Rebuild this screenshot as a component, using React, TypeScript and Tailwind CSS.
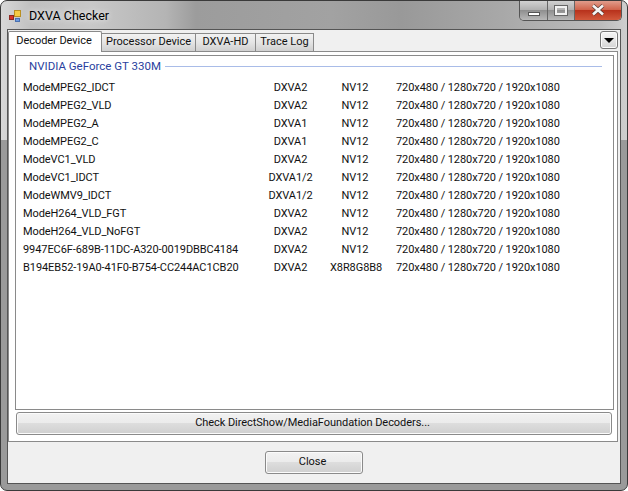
const FONT = "font-['Roboto','Liberation_Sans',Arial,sans-serif]";

const rows = [
  ["ModeMPEG2_IDCT", "DXVA2", "NV12"],
  ["ModeMPEG2_VLD", "DXVA2", "NV12"],
  ["ModeMPEG2_A", "DXVA1", "NV12"],
  ["ModeMPEG2_C", "DXVA1", "NV12"],
  ["ModeVC1_VLD", "DXVA2", "NV12"],
  ["ModeVC1_IDCT", "DXVA1/2", "NV12"],
  ["ModeWMV9_IDCT", "DXVA1/2", "NV12"],
  ["ModeH264_VLD_FGT", "DXVA2", "NV12"],
  ["ModeH264_VLD_NoFGT", "DXVA2", "NV12"],
  ["9947EC6F-689B-11DC-A320-0019DBBC4184", "DXVA2", "NV12"],
  ["B194EB52-19A0-41F0-B754-CC244AC1CB20", "DXVA2", "X8R8G8B8"],
];

function AeroButton({ label, className }: { label: string; className: string }) {
  return (
    <button
      className={`flex items-center justify-center rounded-[3px] border border-[#8a8a8a] bg-[linear-gradient(#f2f2f2_0%,#ebebeb_48%,#dddddd_50%,#cfcfcf_100%)] text-[11px] tracking-[-0.05px] text-[#111] shadow-[inset_0_0_0_1px_#fbfbfb] ${className}`}
    >
      {label}
    </button>
  );
}

export default function App() {
  return (
    <div
      className={`${FONT} flex h-[491px] w-[628px] flex-col overflow-hidden rounded-[7px] border border-[#3a3a3a] bg-[linear-gradient(to_bottom,transparent_0,transparent_139px,#9a9a9a_139px,#9a9a9a_100%),linear-gradient(90deg,#d8d8d8_0,#c0c0c0_30px,#c8c8c8_90px,#b4b4b4_165px,#9c9c9c_195px,#a2a2a2_330px,#999999_400px,#a8a8a8_500px,#bcbcbc_600px,#d0d0d0_628px)] px-[6px] pb-[6px] text-[#111]`}
    >
      {/* Title bar */}
      <div className="flex h-[28px] shrink-0 items-start">
        <svg width="16" height="16" viewBox="0 0 16 16" className="mt-[8px] ml-[2px]">
          <rect x="0.5" y="6.5" width="4" height="4" fill="#d8342a" stroke="#8f2a22" />
          <rect x="5.5" y="1.5" width="6" height="6" fill="#f6cc45" stroke="#b98f22" />
          <rect x="6.5" y="9.5" width="4" height="3" fill="#6d9be0" stroke="#4a70b0" />
        </svg>
        <span className="mt-[5px] ml-[4px] text-[12.5px] leading-[20px] text-black [text-shadow:0_0_6px_#ffffff]">
          DXVA Checker
        </span>
        <div className="mt-[-1px] mr-[-1px] ml-auto flex h-[21px] w-[103px] overflow-hidden rounded-b-[5px] border border-t-0 border-[#555]">
          <div className="flex w-[28px] items-end justify-center border-r border-[#666] bg-[linear-gradient(#d5d5d5,#b0b0b0_50%,#8f8f8f_52%,#b8b8b8)] pb-[4px]">
            <div className="h-[4px] w-[12px] border border-[#555] bg-white" />
          </div>
          <div className="flex w-[27px] items-center justify-center border-r border-[#666] bg-[linear-gradient(#d5d5d5,#b0b0b0_50%,#8f8f8f_52%,#b8b8b8)]">
            <div className="h-[9px] w-[12px] border-2 border-[#f2f2f2] outline outline-1 outline-[#666]" />
          </div>
          <div className="flex flex-1 items-center justify-center bg-[linear-gradient(#e2a393,#d0644c_48%,#b8321c_52%,#d2593c)]">
            <svg width="14" height="12" viewBox="0 0 14 12">
              <path d="M2 1.5 L12 10.5 M12 1.5 L2 10.5" stroke="#5a3a34" strokeWidth="4" />
              <path d="M2 1.5 L12 10.5 M12 1.5 L2 10.5" stroke="#f5f5f5" strokeWidth="2.6" />
            </svg>
          </div>
        </div>
      </div>

      {/* Client area */}
      <div className="flex min-h-0 flex-1 flex-col border border-[#555] bg-[#f0f0f0]">
        {/* Tab strip */}
        <div className="flex h-[21px] shrink-0 items-end text-[11px]">
          <div className="z-10 mb-[-1px] flex h-[21px] w-[94px] items-center justify-center rounded-t-[2px] border border-b-0 border-[#8a8a8a] bg-white pr-[2px] pb-[1px] tracking-[-0.05px]">
            Decoder Device
          </div>
          <div className="flex h-[18px] w-[94px] items-center justify-center border border-b-0 border-l-0 border-[#8a8a8a] bg-[linear-gradient(#f2f2f2,#e4e4e4_50%,#d0d0d0)]">
            Processor Device
          </div>
          <div className="flex h-[18px] w-[60px] items-center justify-center border border-b-0 border-l-0 border-[#8a8a8a] bg-[linear-gradient(#f2f2f2,#e4e4e4_50%,#d0d0d0)]">
            DXVA-HD
          </div>
          <div className="flex h-[18px] w-[58px] items-center justify-center border border-b-0 border-l-0 border-[#8a8a8a] bg-[linear-gradient(#f2f2f2,#e4e4e4_50%,#d0d0d0)]">
            Trace Log
          </div>
          <div className="mr-[2px] mb-[2px] ml-auto flex h-[18px] w-[18px] items-center justify-center rounded-[3px] border border-[#777] bg-[linear-gradient(#f4f4f4,#e6e6e6_50%,#d4d4d4)] shadow-[inset_0_0_0_1px_#fbfbfb]">
            <svg width="10" height="5" viewBox="0 0 10 5">
              <path d="M0 0 H10 L5 5 Z" fill="#000" />
            </svg>
          </div>
        </div>

        {/* Tab page */}
        <div className="mr-[2px] flex h-[391px] shrink-0 flex-col border border-[#8a8a8a] bg-white pt-[3px] pr-[3px] pb-[6px] pl-[6px]">
          <div className="min-h-0 flex-1 border border-[#8a8a8a] bg-white">
            <div className="flex h-[21px] items-center pr-[11px] pl-[13px]">
              <span className="text-[11.5px] text-[#2a3f9e]">NVIDIA GeForce GT 330M</span>
              <div className="ml-[4px] h-px flex-1 bg-[#a9bce8]" />
            </div>
            <div className="mt-[2px] flex flex-col pl-[7px] text-[11px] tracking-[-0.08px]">
              {rows.map(([name, api, format]) => (
                <div key={name} className="flex h-[18px] items-center">
                  <span className="w-[228px] whitespace-nowrap">{name}</span>
                  <span className="w-[79px] text-center">{api}</span>
                  <span className="w-[50px] text-center">{format}</span>
                  <span className="ml-[16px] whitespace-nowrap">720x480 / 1280x720 / 1920x1080</span>
                </div>
              ))}
            </div>
          </div>
          <AeroButton
            label="Check DirectShow/MediaFoundation Decoders..."
            className="mr-[2px] ml-[1px] mt-[2px] h-[23px] shrink-0 pr-[3px]"
          />
        </div>

        {/* Footer */}
        <div className="flex flex-1 items-center justify-center">
          <AeroButton label="Close" className="mr-[1px] h-[23px] w-[98px] pr-[2px]" />
        </div>
      </div>
    </div>
  );
}
